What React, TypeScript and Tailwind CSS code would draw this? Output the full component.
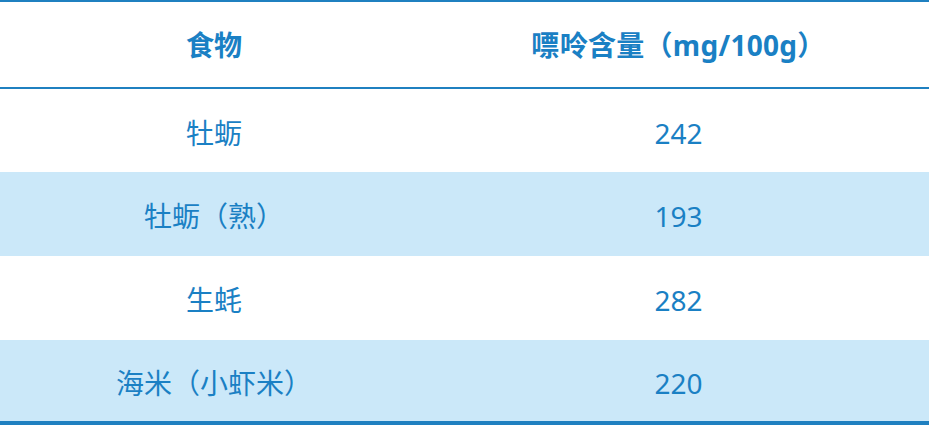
import React from "react";

const rows = [
  { food: "牡蛎", value: "242", h: "h-[83px]", shade: false },
  { food: "牡蛎（熟）", value: "193", h: "h-[84px]", shade: true },
  { food: "生蚝", value: "282", h: "h-[84px]", shade: false },
  { food: "海米（小虾米）", value: "220", h: "h-[81px]", shade: true },
];

export default function App() {
  return (
    <div
      className="w-[929px] h-[425px] bg-white text-[#1a80c4] overflow-hidden"
      style={{ fontFamily: '"Noto Sans", "Noto Sans CJK SC", sans-serif' }}
    >
      <div className="border-t-2 border-b-4 border-[#1f80c0]">
        {/* header */}
        <div className="flex h-[87px] items-center border-b-2 border-[#1f80c0] text-[28px] font-bold">
          <div className="w-[428px] text-center">食物</div>
          <div className="flex-1 text-center tracking-[0.3px]">嘌呤含量（mg/100g）</div>
        </div>
        {rows.map((r) => (
          <div
            key={r.food}
            className={`flex items-center text-[28px] ${r.h} ${
              r.shade ? "bg-[#cbe8f9]" : "bg-white"
            }`}
          >
            <div className="w-[428px] text-center pt-1">{r.food}</div>
            <div className="flex-1 text-center pt-1">{r.value}</div>
          </div>
        ))}
      </div>
    </div>
  );
}
